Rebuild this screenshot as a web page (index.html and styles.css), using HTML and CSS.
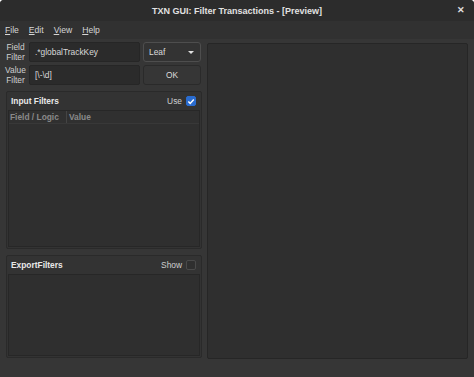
FILE: index.html
```html
<!DOCTYPE html>
<html>
<head>
<meta charset="utf-8">
<link rel="stylesheet" href="styles.css">
</head>
<body>
<div class="window">
  <div class="titlebar">
    <span class="title">TXN GUI: Filter Transactions - [Preview]</span>
    <span class="close">✕</span>
  </div>
  <div class="menubar">
    <span class="menu"><u>F</u>ile</span>
    <span class="menu"><u>E</u>dit</span>
    <span class="menu"><u>V</u>iew</span>
    <span class="menu"><u>H</u>elp</span>
  </div>
  <div class="main">
    <div class="left">
      <div class="form">
        <div class="label">Field<br>Filter</div>
        <div class="input">.*globalTrackKey</div>
        <div class="combo"><span>Leaf</span><span class="arrow"></span></div>
        <div class="label">Value<br>Filter</div>
        <div class="input">[\-\d]</div>
        <div class="button">OK</div>
      </div>
      <div class="group group-input">
        <div class="group-head">
          <span class="group-title">Input Filters</span>
          <span class="check-wrap">Use <span class="check on"><svg width="9" height="9" viewBox="0 0 9 9"><path d="M1.5 4.6 L3.6 6.6 L7.6 2.2" fill="none" stroke="#fff" stroke-width="1.6"/></svg></span></span>
        </div>
        <div class="table">
          <div class="thead">
            <div class="th th1">Field / Logic</div>
            <div class="th th2">Value</div>
          </div>
        </div>
      </div>
      <div class="group group-export">
        <div class="group-head">
          <span class="group-title">ExportFilters</span>
          <span class="check-wrap">Show <span class="check"></span></span>
        </div>
        <div class="table"></div>
      </div>
    </div>
    <div class="right"></div>
  </div>
</div>
</body>
</html>
```

FILE: styles.css
```css
* { box-sizing: border-box; }
html, body { margin: 0; padding: 0; }
body {
  width: 474px;
  height: 377px;
  background: #fff;
  font-family: "Liberation Sans", Arial, sans-serif;
  overflow: hidden;
}
.window {
  width: 474px;
  height: 377px;
  background: #363636;
  border-radius: 4px 4px 0 0;
  display: flex;
  flex-direction: column;
}
.titlebar {
  height: 21px;
  background: #2c2c2c;
  border-radius: 4px 4px 0 0;
  display: flex;
  align-items: center;
  justify-content: center;
  position: relative;
  color: #e2e2e2;
  font-size: 9px;
  font-weight: bold;
}
.title { padding-top: 1px; }
.close {
  position: absolute;
  right: 9px;
  top: 5px;
  font-size: 9px;
  font-weight: bold;
  color: #e0e0e0;
}
.menubar {
  height: 18px;
  background: #313131;
  display: flex;
  align-items: center;
  padding-left: 5px;
  gap: 10px;
  color: #d6d6d6;
  font-size: 8.6px;
}
.menu u { text-decoration: underline; text-underline-offset: 1px; }
.main {
  flex: 1;
  display: flex;
  padding: 3px 6px 18px 5px;
  gap: 5px;
}
.left {
  width: 197px;
  display: flex;
  flex-direction: column;
}
.form {
  display: grid;
  grid-template-columns: 21px 111px 58px;
  grid-auto-rows: 20px;
  column-gap: 3px;
  row-gap: 3px;
  padding-left: 0;
}
.label {
  color: #cfcfcf;
  font-size: 8.4px;
  line-height: 10px;
  text-align: center;
}
.input {
  background: #2b2b2b;
  border: 1px solid #262626;
  border-radius: 2px;
  color: #dadada;
  font-size: 8.4px;
  line-height: 18px;
  padding-left: 5px;
}
.combo {
  background: #333;
  border: 1px solid #4e4e4e;
  border-radius: 3px;
  color: #dcdcdc;
  font-size: 8.4px;
  display: flex;
  align-items: center;
  justify-content: space-between;
  padding: 0 6px 0 5px;
}
.arrow {
  width: 0;
  height: 0;
  border-left: 3.5px solid transparent;
  border-right: 3.5px solid transparent;
  border-top: 3.5px solid #e0e0e0;
}
.button {
  background: #363636;
  border: 1px solid #2a2a2a;
  border-radius: 3px;
  color: #dcdcdc;
  font-size: 8.4px;
  display: flex;
  align-items: center;
  justify-content: center;
}
.group {
  margin-left: 1px;
  border: 1px solid #2a2a2a;
  border-radius: 2px;
  background: #333;
  display: flex;
  flex-direction: column;
  padding: 0 1px 1px 1px;
}
.group-input { margin-top: 6px; height: 158px; }
.group-export { margin-top: 6px; height: 103px; }
.group-head {
  height: 18px;
  display: flex;
  align-items: center;
  justify-content: space-between;
  padding: 0 4px 0 3px;
  font-size: 8.4px;
}
.group-title { color: #e8e8e8; font-weight: bold; }
.check-wrap {
  color: #cfcfcf;
  display: flex;
  align-items: center;
  gap: 4px;
}
.check {
  width: 10px;
  height: 10px;
  border-radius: 2px;
  border: 1px solid #4a4a4a;
  background: #2f2f2f;
  display: flex;
  align-items: center;
  justify-content: center;
}
.check.on {
  background: #2a6ccf;
  border-color: #2a6ccf;
}
.table {
  flex: 1;
  background: #2f2f2f;
  border: 1px solid #272727;
}
.thead {
  height: 13px;
  display: flex;
  border-bottom: 1px solid #383838;
  background: #303030;
}
.th {
  color: #8a8a8a;
  font-size: 8.4px;
  font-weight: bold;
  line-height: 12px;
  padding-left: 1px;
}
.th1 { width: 58px; border-right: 1px solid #444; }
.th2 { padding-left: 2px; }
.right {
  flex: 1;
  margin-top: 1px;
  background: #2f2f2f;
  border: 1px solid #262626;
  border-radius: 2px;
}
```
